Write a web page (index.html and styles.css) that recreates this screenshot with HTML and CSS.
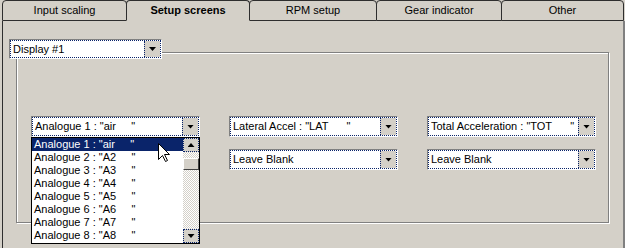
FILE: index.html
```html
<!DOCTYPE html>
<html lang="en">
<head>
<meta charset="UTF-8">
<title>Setup screens</title>
<link rel="stylesheet" href="styles.css">
</head>
<body>
<div class="tabs">
  <div class="tab t1">Input scaling</div>
  <div class="tab t2 active">Setup screens</div>
  <div class="tab t3">RPM setup</div>
  <div class="tab t4">Gear indicator</div>
  <div class="tab t5">Other</div>
</div>
<div class="panel">
  <div class="combo display">
    <div class="field"><span class="val">Display #1</span><span class="btn"></span></div>
  </div>
  <div class="group">
    <div class="grid">
      <div class="cell">
        <div class="combo">
          <div class="field"><span class="val">Analogue 1 : "air     "</span><span class="btn"></span></div>
        </div>
        <div class="list">
          <div class="items">
            <div class="item sel">Analogue 1 : "air     "</div>
            <div class="item">Analogue 2 : "A2     "</div>
            <div class="item">Analogue 3 : "A3     "</div>
            <div class="item">Analogue 4 : "A4     "</div>
            <div class="item">Analogue 5 : "A5     "</div>
            <div class="item">Analogue 6 : "A6     "</div>
            <div class="item">Analogue 7 : "A7     "</div>
            <div class="item">Analogue 8 : "A8     "</div>
          </div>
          <div class="scroll">
            <div class="sbtn up"></div>
            <div class="gap"></div>
            <div class="thumb"></div>
            <div class="track"></div>
            <div class="sbtn down"></div>
          </div>
          <svg class="cursor" width="13" height="20" viewBox="0 0 13 20">
            <polygon points="0.5,0.5 0.5,16.5 4.5,12.5 7.5,18.5 9.5,17.5 6.5,11.5 11.5,11.5" fill="#fff" stroke="#000" stroke-width="1"/>
          </svg>
        </div>
      </div>
      <div class="cell">
        <div class="combo">
          <div class="field"><span class="val">Lateral Accel : "LAT      "</span><span class="btn"></span></div>
        </div>
      </div>
      <div class="cell">
        <div class="combo">
          <div class="field"><span class="val">Total Acceleration : "TOT      "</span><span class="btn"></span></div>
        </div>
      </div>
      <div class="cell"></div>
      <div class="cell">
        <div class="combo">
          <div class="field"><span class="val">Leave Blank</span><span class="btn"></span></div>
        </div>
      </div>
      <div class="cell">
        <div class="combo">
          <div class="field"><span class="val">Leave Blank</span><span class="btn"></span></div>
        </div>
      </div>
    </div>
  </div>
</div>
</body>
</html>
```

FILE: styles.css
```css
* {
  box-sizing: border-box;
}

body {
  margin: 0;
  width: 625px;
  height: 248px;
  overflow: hidden;
  background: #d4d0c8;
  font-family: "Liberation Sans", Arial, sans-serif;
  font-size: 11px;
  color: #000;
}

.tabs {
  display: flex;
  height: 21px;
  padding-left: 2px;
}

.tab {
  height: 21px;
  border: 1px solid #2e2e2e;
  border-radius: 4px 4px 0 0;
  margin-left: -1px;
  text-align: center;
  line-height: 19px;
  background: #d4d0c8;
}

.t1 { width: 125px; margin-left: 0; }
.t2 { width: 124px; }
.t3 { width: 128px; }
.t4 { width: 126px; }
.t5 { width: 123px; }

.tab.active {
  font-weight: bold;
  border-bottom-color: #d4d0c8;
  position: relative;
  z-index: 1;
}

.panel {
  margin-left: 2px;
  height: 227px;
  border-left: 1px solid #2e2e2e;
  border-right: 2px solid #808080;
  padding: 18px 0 0 6px;
}

.combo {
  height: 21px;
  border: 1px solid;
  border-color: #808080 #fff #fff #808080;
}

.field {
  height: 100%;
  display: flex;
  align-items: stretch;
  background: #fff;
  border: 1px dotted #0a246a;
}

.val {
  flex: 1;
  padding-left: 2px;
  line-height: 17px;
  white-space: pre;
  overflow: hidden;
}

.btn {
  width: 16px;
  background: #d4d0c8;
  border-left: 1px dotted #0a246a;
  display: flex;
  align-items: center;
  justify-content: center;
}

.btn::after,
.sbtn::after {
  content: "";
  width: 7px;
  height: 4px;
  background: #000;
  clip-path: polygon(0 0, 100% 0, 50% 100%);
}

.display {
  width: 153px;
  height: 20px;
  position: relative;
  z-index: 1;
}

.group {
  width: 593px;
  height: 171px;
  margin: -7px 0 0 7px;
  border: 1px solid #808080;
  box-shadow: 1px 1px 0 #fff, inset 1px 1px 0 #fff;
  padding: 63px 0 0 14px;
}

.grid {
  display: grid;
  grid-template-columns: repeat(3, 169px);
  grid-auto-rows: 21px;
  column-gap: 29px;
  row-gap: 12px;
}

.cell {
  position: relative;
}

.list {
  position: absolute;
  top: 100%;
  left: 0;
  width: 169px;
  height: 107px;
  z-index: 2;
  display: flex;
  border: 1px solid #000;
  background: #fff;
}

.items {
  flex: 1;
}

.item {
  height: 13px;
  line-height: 13px;
  padding-left: 2px;
  white-space: pre;
}

.item.sel {
  background: #0a246a;
  color: #fff;
}

.scroll {
  width: 16px;
  display: flex;
  flex-direction: column;
  background: repeating-conic-gradient(#d4d0c8 0 25%, #fff 0 50%) 0 0 / 2px 2px;
}

.sbtn {
  height: 14px;
  background: #d4d0c8;
  border: 1px dotted #0a246a;
  display: flex;
  align-items: center;
  justify-content: center;
}

.sbtn.up::after {
  clip-path: polygon(50% 0, 100% 100%, 0 100%);
}

.gap {
  height: 6px;
}

.thumb {
  height: 12px;
  background: #d4d0c8;
  border: 1px solid;
  border-color: #fff #404040 #404040 #fff;
}

.track {
  flex: 1;
}

.cursor {
  position: absolute;
  left: 126px;
  top: 5px;
}
```
